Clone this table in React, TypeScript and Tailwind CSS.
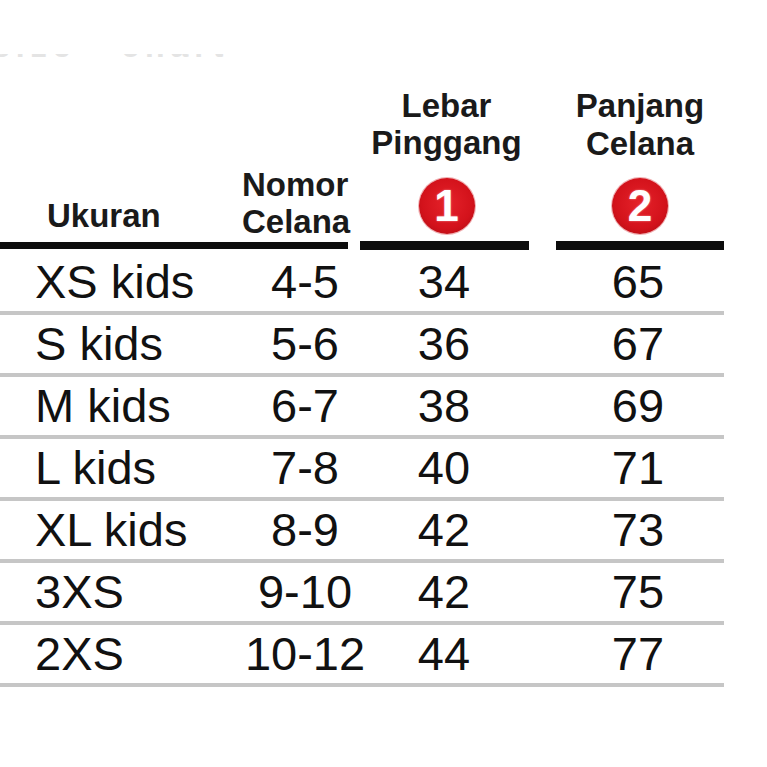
const ROWS = [
  { size: "XS kids", no: "4-5", waist: "34", length: "65" },
  { size: "S kids", no: "5-6", waist: "36", length: "67" },
  { size: "M kids", no: "6-7", waist: "38", length: "69" },
  { size: "L kids", no: "7-8", waist: "40", length: "71" },
  { size: "XL kids", no: "8-9", waist: "42", length: "73" },
  { size: "3XS", no: "9-10", waist: "42", length: "75" },
  { size: "2XS", no: "10-12", waist: "44", length: "77" },
];

function Badge({ n }: { n: string }) {
  return (
    <div className="flex h-[56px] w-[56px] items-center justify-center rounded-full bg-[radial-gradient(circle_at_50%_45%,#e5222a_0%,#d3121b_60%,#a60b11_100%)] shadow-[0_0_0_1px_#f0b0b3]">
      <span className="text-[44px] font-bold leading-none text-white [text-shadow:0_0_2px_#f59aa0]">
        {n}
      </span>
    </div>
  );
}

export default function App() {
  return (
    <div className="h-[767px] w-[767px] overflow-hidden bg-white font-['Liberation_Sans',Arial,sans-serif] text-[#141414]">
      {/* faint cut-off title */}
      <div className="mt-[54px] h-[10px] overflow-hidden">
        <div className="-mt-[24px] -ml-[8px] whitespace-nowrap text-[32px] font-bold leading-none tracking-[6px] text-[#e4e4e4]">
          size &nbsp;&nbsp;chart
        </div>
      </div>

      {/* header */}
      <div className="flex h-[177px] items-end text-[33px] font-bold leading-[37px] text-[#1a1a1a]">
        <div className="w-[242px] pb-[7px] pl-[47px]">Ukuran</div>
        <div className="w-[118px] pb-[1px]">
          <div>Nomor</div>
          <div>Celana</div>
        </div>
        <div className="flex w-[169px] flex-col items-center pb-[7px] pl-[4px]">
          <div className="text-center">
            <div>Lebar</div>
            <div>Pinggang</div>
          </div>
          <div className="mt-[17px]">
            <Badge n="1" />
          </div>
        </div>
        <div className="ml-[27px] flex w-[168px] flex-col items-center pb-[7px]">
          <div className="text-center">
            <div>Panjang</div>
            <div className="mt-[1px]">Celana</div>
          </div>
          <div className="mt-[16px]">
            <Badge n="2" />
          </div>
        </div>
      </div>

      {/* header rules */}
      <div className="flex h-[9px] items-start">
        <div className="mt-[1px] h-[7px] w-[348px] bg-[#0d0d0d]" />
        <div className="ml-[12px] h-[9px] w-[169px] bg-[#0d0d0d]" />
        <div className="ml-[27px] h-[9px] w-[168px] bg-[#0d0d0d]" />
      </div>

      {/* rows */}
      <div className="w-[724px] pt-[3px] text-[47px] font-normal text-[#111]">
        {ROWS.map((r) => (
          <div
            key={r.size}
            className="flex h-[62px] items-center border-b-[4px] border-[#c6c6c6] leading-[58px]"
          >
            <div className="w-[240px] whitespace-nowrap pl-[35px]">{r.size}</div>
            <div className="w-[130px] whitespace-nowrap text-center">{r.no}</div>
            <div className="w-[148px] text-center">{r.waist}</div>
            <div className="flex-1 pl-[34px] text-center">{r.length}</div>
          </div>
        ))}
      </div>
    </div>
  );
}
